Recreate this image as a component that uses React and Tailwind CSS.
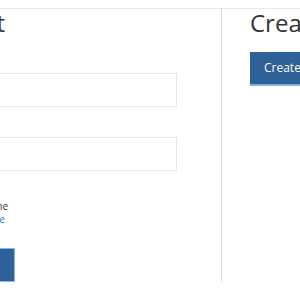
import React from 'react';

export default function App() {
  return (
    <div className="w-[300px] h-[300px] bg-white overflow-hidden pt-[8px] text-[#333]" style={{ fontFamily: '"Open Sans", "Liberation Sans", sans-serif' }}>
      <div className="border-t border-[#e8e8e8] flex">
        <div className="w-[222px] h-[273px] shrink-0 border-r border-[#dcdcdc] overflow-hidden">
          <div className="w-[400px] ml-[-223px] flex flex-col">
            <div className="w-[228px] flex justify-end whitespace-nowrap">
              <h2 className="text-[24px] leading-[28px] font-normal">Sign in to your account</h2>
            </div>

            <input type="email" className="mt-[36px] h-[34px] w-full border border-[#e6e6e6] bg-white outline-none px-3 text-sm" />
            <input type="password" className="mt-[30px] h-[34px] w-full border border-[#e6e6e6] bg-white outline-none px-3 text-sm" />

            <div className="mt-[29px] w-[231px] flex justify-end whitespace-nowrap text-[10px] leading-[13px]">
              <label>Keep me signed in on this machine</label>
            </div>
            <div className="w-[228px] flex justify-end whitespace-nowrap text-[10px] leading-[13px]">
              <a href="#" className="text-[#2f7bd6]">Forgot your password? Reset it here</a>
            </div>

            <div className="mt-[22px] w-[238px] flex justify-end">
              <button className="h-[34px] w-[90px] shrink-0 bg-[#2e6197] border border-[#86b6e4] text-white text-[12px]">Sign in</button>
            </div>
          </div>
        </div>

        <div className="pl-[28px] whitespace-nowrap">
          <h2 className="text-[24px] leading-[28px] font-normal">Create an account</h2>
          <button className="mt-[15px] h-[34px] px-[14px] bg-[#2e6197] border-b-2 border-[#7fb0e0] text-white text-[12px]">Create account</button>
        </div>
      </div>
    </div>
  );
}
